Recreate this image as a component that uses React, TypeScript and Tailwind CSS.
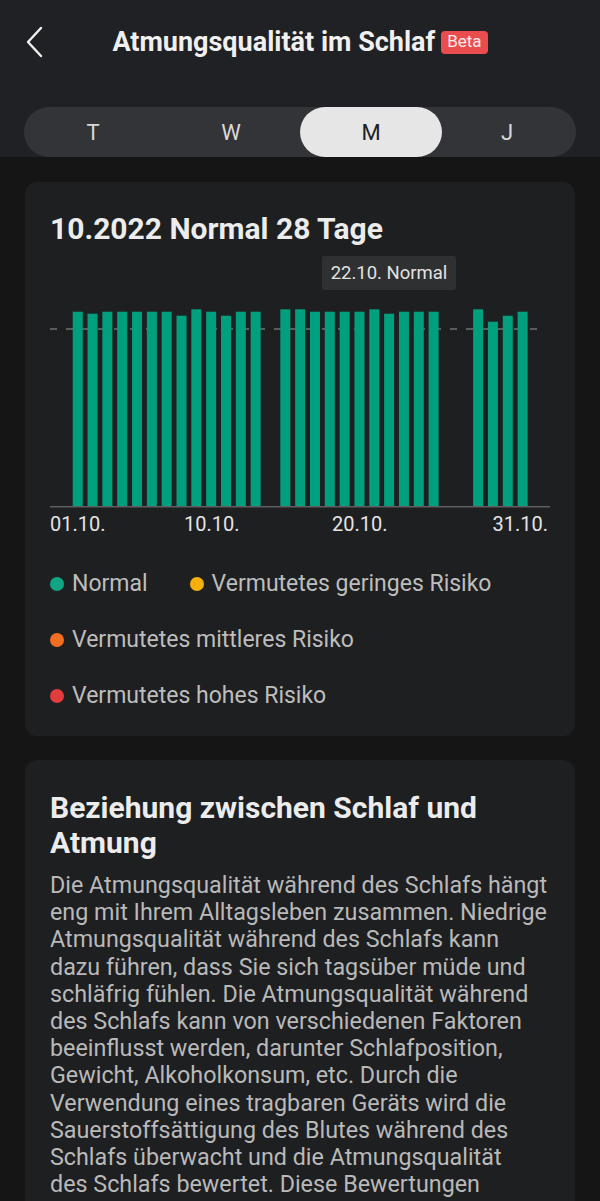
import React from "react";

const tops: (number | null)[] = [
  65.7, 67.7, 65.7, 65.7, 65.7, 65.7, 65.7, 69.7, 63.3, 65.7, 69.7, 65.7, 65.7,
  null,
  63.3, 63.3, 65.7, 65.7, 65.7, 65.7, 63.3, 67.7, 65.7, 65.7, 65.7,
  null, null,
  63.3, 75.7, 69.7, 65.7,
];

function Chart() {
  const base = 260.7;
  return (
    <div className="relative mt-0 h-[294px] w-[500px]">
      <svg width="500" height="294" className="absolute left-0 top-0">
        <line x1="0" y1="83" x2="494" y2="83" stroke="#9a9a9a" strokeWidth="1" strokeDasharray="7 9" />
        {tops.map((t, i) =>
          t === null ? null : (
            <rect key={i} x={22.7 + 14.83 * i} y={t} width={10} height={base - t} fill="#00a07e" />
          )
        )}
        <line x1="0" y1={base} x2="500" y2={base} stroke="#5e5e60" strokeWidth="1.5" />
        <g fill="#e4e4e4" fontFamily="Roboto, sans-serif" fontSize="20">
          <text x="0" y="284.5">01.10.</text>
          <text x="134" y="284.5">10.10.</text>
          <text x="282" y="284.5">20.10.</text>
          <text x="498" y="284.5" textAnchor="end">31.10.</text>
        </g>
      </svg>
      <div className="absolute left-[272px] top-[10px] flex h-[34px] w-[134px] items-center justify-center rounded-[2px] bg-[#2f3032] pt-[2px] text-[18.5px] text-[#e2e2e2]">
        22.10. Normal
      </div>
    </div>
  );
}

function Legend() {
  const items = [
    { c: "bg-[#10a583]", t: "Normal" },
    { c: "bg-[#f5b00c]", t: "Vermutetes geringes Risiko" },
    { c: "bg-[#f26f22]", t: "Vermutetes mittleres Risiko" },
    { c: "bg-[#e23d3d]", t: "Vermutetes hohes Risiko" },
  ];
  return (
    <div className="mt-[30px] flex flex-wrap gap-x-[42px] gap-y-[28px]">
      {items.map((it, i) => (
        <div key={i} className={"flex h-[28px] items-center gap-[8px]" + (i >= 2 ? " w-full" : "")}>
          <span className={"h-[14px] w-[14px] shrink-0 rounded-full " + it.c} />
          <span className="text-[23px] text-[#bdbdbd]">{it.t}</span>
        </div>
      ))}
    </div>
  );
}

export default function App() {
  return (
    <div className="h-[1201px] w-[600px] overflow-hidden bg-[#151516] font-['Roboto',sans-serif]">
      <div className="h-[157px] bg-[#202124]">
        <div className="relative flex h-[84px] items-center justify-center">
          <svg className="absolute left-[25px] top-[26px]" width="20" height="32" viewBox="0 0 20 32">
            <path d="M16 2 L3 16 L16 30" fill="none" stroke="#f0f0f0" strokeWidth="2.4" strokeLinecap="round" strokeLinejoin="round" />
          </svg>
          <span className="text-[27px] font-bold text-[#f0f0f0]">Atmungsqualität im Schlaf</span>
          <span className="ml-[6px] flex h-[23px] items-center rounded-[4px] bg-[#ea4d4e] px-[6px] text-[17px] text-[#fbeaea]">Beta</span>
        </div>
        <div className="mx-[24px] mt-[23px] grid h-[50px] grid-cols-4 rounded-full bg-[#333437] text-[22px]">
          <div className="flex items-center justify-center text-[#d8d8d8]">T</div>
          <div className="flex items-center justify-center text-[#d8d8d8]">W</div>
          <div className="-mr-[4px] flex items-center justify-center rounded-full bg-[#e6e6e6] text-[#202124]">M</div>
          <div className="flex items-center justify-center text-[#d8d8d8]">J</div>
        </div>
      </div>

      <div className="mx-[25px] mt-[25px] rounded-[12px] bg-[#1e1f21] px-[25px] pb-[26px] pt-[30px]">
        <div className="text-[30px] font-bold leading-[34px] text-[#ececec]">10.2022 Normal 28 Tage</div>
        <Chart />
        <Legend />
      </div>

      <div className="mx-[25px] mt-[24px] rounded-[12px] bg-[#1e1f21] px-[25px] pb-[30px] pt-[30px]">
        <div className="text-[30px] font-bold leading-[35px] text-[#ececec]">Beziehung zwischen Schlaf und Atmung</div>
        <p className="mt-[12px] text-[23.3px] leading-[27.2px] text-[#b9b9b9]">
          Die Atmungsqualität während des Schlafs hängt eng mit Ihrem Alltagsleben zusammen. Niedrige Atmungsqualität während des Schlafs kann dazu führen, dass Sie sich tagsüber müde und schläfrig fühlen. Die Atmungsqualität während des Schlafs kann von verschiedenen Faktoren beeinflusst werden, darunter Schlafposition, Gewicht, Alkoholkonsum, etc. Durch die Verwendung eines tragbaren Geräts wird die Sauerstoffsättigung des Blutes während des Schlafs überwacht und die Atmungsqualität
          <br />
          des Schlafs bewertet. Diese Bewertungen können Ihnen helfen, Ihre Schlafgewohnheiten zu verbessern.
        </p>
      </div>
    </div>
  );
}
